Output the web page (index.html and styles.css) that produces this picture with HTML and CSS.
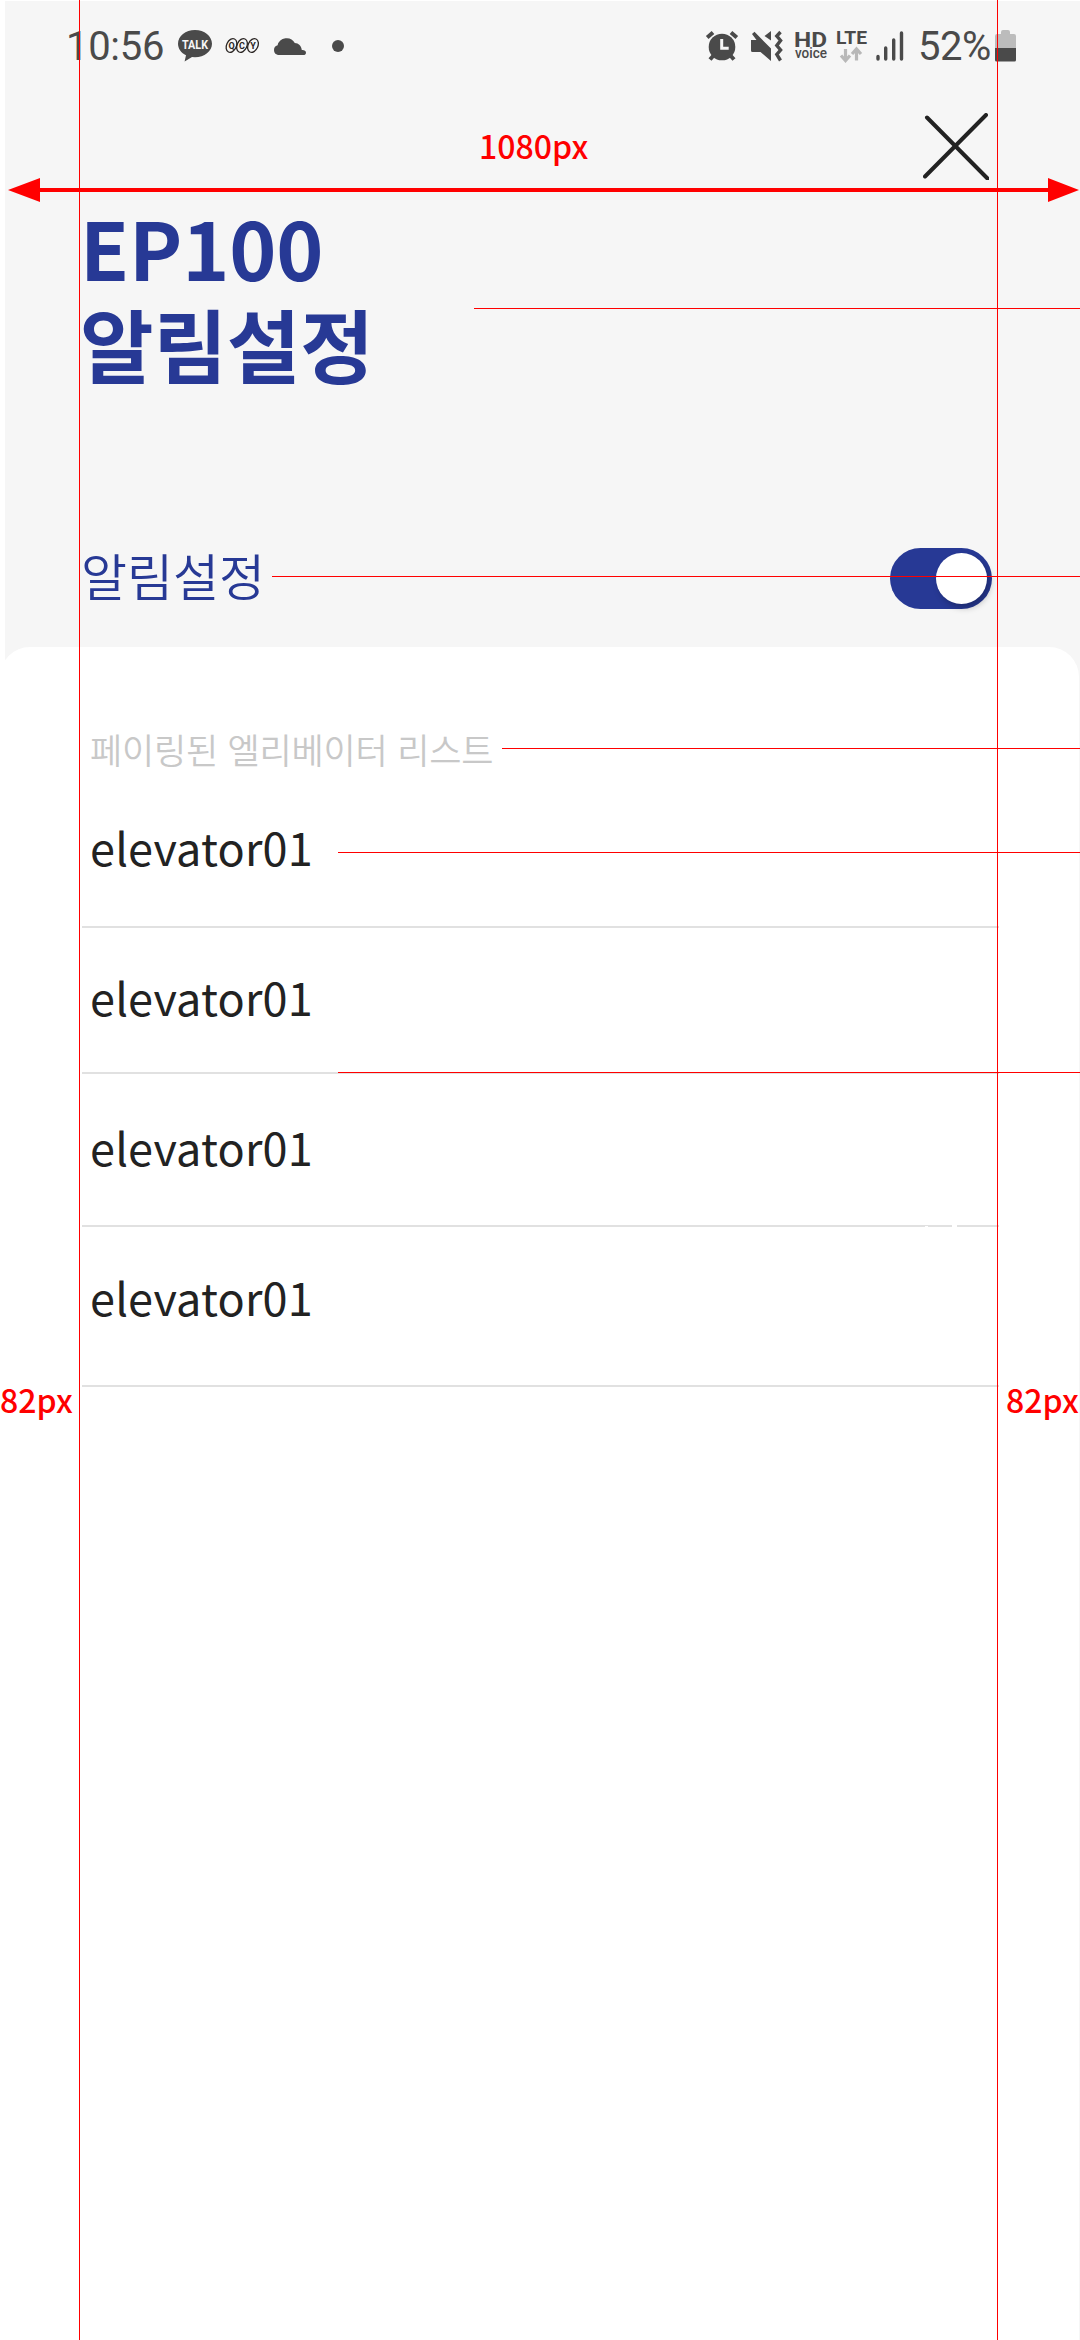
FILE: index.html
```html
<!DOCTYPE html>
<html lang="ko">
<head>
<meta charset="utf-8">
<title>EP100 알림설정</title>
<link rel="stylesheet" href="styles.css">
</head>
<body>
<div class="screen">
  <header class="top">
    <div class="status">
      <div class="status-left">
        <span class="clock">10:56</span>
        <svg class="talk" width="34" height="32" viewBox="0 0 34 32"><path fill="#4a4a4a" d="M17 0C7.600 0 0 6 0 13.700c0 5 3.200 9.200 8 11.600L6.600 31.600l7.400-4.700 3 .3c9.400 0 17-6 17-13.500S26.400 0 17 0z"/><text x="17" y="19" text-anchor="middle" textLength="26" lengthAdjust="spacingAndGlyphs">TALK</text></svg>
        <svg class="qcy" width="35" height="18" viewBox="0 0 35 18"><g fill="none" stroke="#2b2624" stroke-width="1.300"><ellipse cx="6.500" cy="8.500" rx="4.900" ry="7.200" transform="rotate(25 6.500 8.500)"/><ellipse cx="17" cy="8.500" rx="4.900" ry="7.200" transform="rotate(25 17 8.500)"/><ellipse cx="28" cy="8.500" rx="4.900" ry="7.200" transform="rotate(25 28 8.500)"/></g><text x="6.500" y="12">Q</text><text x="17" y="12">C</text><text x="28" y="12">Y</text></svg>
        <svg class="cloud" width="33" height="18" viewBox="0 0 33 18"><path fill="#4a4a4a" d="M5 18a5 5 0 0 1-.4-9.700A9.300 9.300 0 0 1 21.800 6c3.800.2 6.600 2.800 7 7 2.400-.2 4.200.9 4.200 2.700 0 1.500-1.100 2.300-2.800 2.300z"/></svg>
        <span class="dot"></span>
      </div>
      <div class="status-right">
        <svg class="alarm" width="32" height="31" viewBox="0 0 32 31"><g stroke="#4a4a4a" fill="none"><path stroke-width="4" d="M1.200 6.500 7 1.500M30.800 6.500 25 1.500"/><path stroke-width="4" d="m8 24-4 4.500M24 24l4 4.500"/></g><circle cx="16" cy="16" r="13.300" fill="#4a4a4a"/><path d="M15.700 8v9.300h7" stroke="#f6f6f6" stroke-width="3" fill="none"/></svg>
        <svg class="mute" width="32" height="31" viewBox="0 0 32 31"><path fill="#4a4a4a" d="M0 9h5.500L1 3l2.500-2.200L20 17.500V30L9.500 21H1.500Q0 21 0 19.500zM20 0v9.500L13.500 5z"/><path d="m29.500 1-3.700 4 3.800 4.500-3.800 5 3.800 4.500-3.800 4.500 3.700 6" fill="none" stroke="#4a4a4a" stroke-width="3.400"/></svg>
        <svg class="hd" width="33" height="32" viewBox="0 0 33 32"><text class="hd-big" x="-1" y="16.800" textLength="33" lengthAdjust="spacingAndGlyphs">HD</text><text class="hd-small" x="0" y="28" textLength="32" lengthAdjust="spacingAndGlyphs">voice</text></svg>
        <svg class="lte" width="30" height="34" viewBox="0 0 30 34"><text x="-1" y="15" textLength="31" lengthAdjust="spacingAndGlyphs">LTE</text><path d="M8.500 20V31M4 26.500l4.500 5 4.500-5M19.500 31.500v-11M15 25l4.500-5 4.500 5" fill="none" stroke="#b8b8b8" stroke-width="3.200"/></svg>
        <svg class="signal" width="28" height="30" viewBox="0 0 28 30"><path d="M2 25.500v2.500M9.700 17v11M17.700 9v19M25.500 2v26" stroke="#4a4a4a" stroke-width="3.400" stroke-linecap="round"/></svg>
        <span class="percent">52%</span>
        <svg class="battery" width="21" height="32" viewBox="0 0 21 32"><path fill="#bcbcbc" d="M6 4V2q0-2 2-2h5q2 0 2 2v2h4q2 0 2 2v12H0V6q0-2 2-2z"/><path fill="#4a4a4a" d="M0 18h21v12q0 1.500-1.500 1.500h-18Q0 31.500 0 30z"/></svg>
      </div>
    </div>
    <div class="close-row">
      <svg class="close" width="66" height="67" viewBox="0 0 66 67"><path d="m4 4.500 60.500 61M63 2 2 63.500" stroke="#222" stroke-width="4" stroke-linecap="round"/></svg>
    </div>
    <h1 class="title">EP100<br>알림설정</h1>
    <div class="setting">
      <span class="setting-name">알림설정</span>
      <span class="toggle"><span class="knob"></span></span>
    </div>
  </header>
  <main class="panel">
    <h2 class="list-title">페이링된 엘리베이터 리스트</h2>
    <ul class="list">
      <li class="row row-1">elevator01</li>
      <li class="row row-2">elevator01</li>
      <li class="row row-3">elevator01</li>
      <li class="row row-4">elevator01</li>
    </ul>
  </main>

  <!-- Dimension guides drawn over the screen -->
  <span class="guide vertical left"></span>
  <span class="guide vertical right"></span>
  <span class="guide callout title-line"></span>
  <span class="guide callout setting-line"></span>
  <span class="guide callout label-line"></span>
  <span class="guide callout item-line"></span>
  <span class="guide callout divider-line"></span>
  <svg class="arrow" width="1080" height="24" viewBox="0 0 1080 24"><path fill="#f00" d="M8 12 40 0v10h1008V0l31 12-31 12V14H40v10z"/></svg>
  <span class="measure measure-top">1080px</span>
  <span class="measure measure-left">82px</span>
  <span class="measure measure-right">82px</span>
</div>
</body>
</html>
```
FILE: styles.css
```css
* { box-sizing: border-box; }

body {
  margin: 0;
  background: #fff;
  font-family: "Noto Sans CJK KR", "Noto Sans", sans-serif;
  color: #222;
}

.screen {
  position: relative;
  width: 1080px;
  height: 2340px;
  overflow: hidden;
  background:
    linear-gradient(#f6f6f6, #f6f6f6) 5px 1px / 1075px 690px no-repeat,
    linear-gradient(#f6f6f6, #f6f6f6) 100% 1px / 1px 100% no-repeat,
    #fff;
}

.top {
  height: 647px;
}

.status {
  display: flex;
  justify-content: space-between;
  height: 92px;
  padding: 0 64px 0 66px;
  font-family: Roboto, sans-serif;
  font-size: 40px;
  line-height: 92px;
  color: #4a4a4a;
}

.status-left,
.status-right {
  display: flex;
  align-items: center;
}

.status svg {
  display: block;
  flex: none;
  overflow: visible;
}

.status text { fill: #4a4a4a; font-family: Roboto, sans-serif; }

.clock { width: 112px; letter-spacing: -0.3px; padding-top: 2px; }
.status .talk text { fill: #f6f6f6; font-size: 13px; font-weight: 700; }
.qcy { margin-left: 13px; }
.status .qcy text { fill: #2b2624; font-size: 9px; font-weight: 700; text-anchor: middle; }
.cloud { margin-left: 13px; }

.dot {
  width: 12px;
  height: 12px;
  margin-left: 26px;
  border-radius: 50%;
  background: #4a4a4a;
}

.mute { margin-left: 13px; }
.hd { margin-left: 12px; }
.status .hd-big { font-size: 20px; font-weight: 700; }
.status .hd-small { font-size: 14px; font-weight: 500; }
.lte { margin-left: 9px; }
.status .lte text { font-size: 19px; font-weight: 700; }
.signal { margin-left: 9px; }
.percent { width: 77px; margin-left: 14px; padding-top: 2px; letter-spacing: -0.5px; }

.close-row {
  display: flex;
  justify-content: flex-end;
  height: 106px;
  padding: 21px 91px 0 0;
}

.close { display: block; }

.title {
  margin: 0;
  padding-left: 80px;
  font-size: 80px;
  font-weight: 700;
  line-height: 96px;
  letter-spacing: -0.2px;
  color: #273995;
}

.setting {
  display: flex;
  align-items: flex-start;
  justify-content: space-between;
  padding: 158px 88px 0 81px;
}

.setting-name {
  margin-top: -4px;
  font-size: 50px;
  font-weight: 350;
  line-height: 60px;
  color: #273995;
}

.toggle {
  display: flex;
  justify-content: flex-end;
  width: 102px;
  height: 61px;
  padding: 5px;
  border-radius: 31px;
  background: #273995;
}

.knob {
  width: 51px;
  height: 51px;
  border-radius: 50%;
  background: #fff;
  box-shadow: 3px 4px 6px rgba(0, 0, 0, 0.25);
}

.panel {
  height: 1693px;
  margin-right: 1px;
  padding: 81px 81px 0 82px;
  border-radius: 30px 30px 0 0;
  background: #fff;
}

.list-title {
  height: 48px;
  margin: 0 0 0 8px;
  font-size: 35px;
  font-weight: 350;
  line-height: 42px;
  letter-spacing: -0.2px;
  color: #c8c8c8;
}

.list {
  margin: 0;
  padding: 0;
  list-style: none;
}

.row {
  width: 917px;
  padding-left: 8px;
  border-bottom: 2px solid #e1e1e1;
  font-size: 45px;
  font-weight: 400;
  line-height: 62px;
  letter-spacing: 0.2px;
}

.row-1 { height: 152px; padding-top: 40px; }
.row-2 { height: 146px; padding-top: 38px; }
.row-3 {
  height: 153px;
  padding-top: 42px;
  border-bottom: 0;
  background:
    linear-gradient(#fff, #fff) 870px 100% / 5px 2px no-repeat,
    linear-gradient(#fff, #fff) 843px 100% / 3px 1px no-repeat,
    linear-gradient(#e1e1e1, #e1e1e1) 0 100% / 100% 2px no-repeat;
}
.row-4 { height: 160px; padding-top: 39px; }

.guide {
  position: absolute;
  background: #f00;
}

.vertical { top: 0; width: 1px; height: 2340px; }
.left { left: 79px; }
.right { left: 997px; }
.callout { right: 0; height: 1px; }
.title-line { top: 308px; left: 474px; }
.setting-line { top: 576px; left: 272px; }
.label-line { top: 748px; left: 502px; }
.item-line { top: 852px; left: 338px; }
.divider-line { top: 1072px; left: 338px; }

.arrow {
  position: absolute;
  top: 178px;
  left: 0;
}

.measure {
  position: absolute;
  font-size: 32px;
  font-weight: 500;
  line-height: 40px;
  color: #f00;
}

.measure-top { top: 125px; left: 479px; }
.measure-left { top: 1379px; left: 0; }
.measure-right { top: 1379px; left: 1006px; }
```
